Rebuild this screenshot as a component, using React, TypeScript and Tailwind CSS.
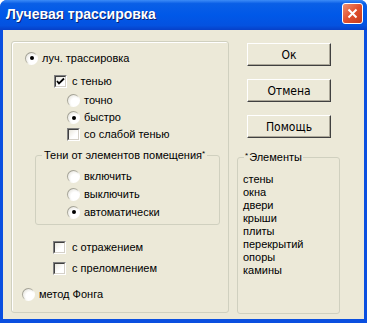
import React from 'react';

const font = "font-['Liberation_Sans',Arial,sans-serif] text-[11px] text-black";

const Radio: React.FC<{ on?: boolean }> = ({ on }) => (
  <div className="w-[13px] h-[13px] rounded-full bg-[linear-gradient(135deg,#8a8a80_0%,#b8b6a8_45%,#ffffff_60%)] p-[1px] shrink-0">
    <div className="w-full h-full rounded-full bg-[radial-gradient(circle_at_65%_65%,#ffffff_40%,#dcdad0_100%)] flex items-center justify-center">
      {on && <div className="w-[4px] h-[4px] rounded-full bg-black" />}
    </div>
  </div>
);

const Check: React.FC<{ on?: boolean }> = ({ on }) => (
  <div className="w-[13px] h-[13px] shrink-0 border border-t-[#808080] border-l-[#808080] border-r-white border-b-white">
    <div className="w-full h-full border border-t-[#404040] border-l-[#404040] border-r-[#d4d0c8] border-b-[#d4d0c8] bg-[linear-gradient(135deg,#e8e6dc,#ffffff_60%)] flex items-center justify-center">
      {on && (
        <svg width="9" height="9" viewBox="0 0 9 9">
          <path d="M1 4 L3 6.5 L8 1.5" fill="none" stroke="#000" strokeWidth="1.8" />
        </svg>
      )}
    </div>
  </div>
);

const Row: React.FC<{ kind: 'r' | 'c'; on?: boolean; label: string; cls: string; gap?: string }> = ({ kind, on, label, cls, gap = 'gap-[4px]' }) => (
  <div className={`flex items-center ${gap} ${cls}`}>
    {kind === 'r' ? <Radio on={on} /> : <Check on={on} />}
    <span className="leading-none">{label}</span>
  </div>
);

const Btn: React.FC<{ label: string; cls: string }> = ({ label, cls }) => (
  <button className={`w-[84px] h-[23px] ml-[10px] bg-[#ece9d8] border border-t-white border-l-white border-r-[#404040] border-b-[#404040] shadow-[inset_-1px_-1px_0_#aca899] flex items-center justify-center font-['Liberation_Sans_Narrow','DejaVu_Sans_Condensed',sans-serif] text-[12px] text-black ${cls}`}>
    {label}
  </button>
);

const elements = ['стены', 'окна', 'двери', 'крыши', 'плиты', 'перекрытий', 'опоры', 'камины'];

export default function App() {
  return (
    <div className={`w-[367px] h-[323px] flex flex-col bg-[#0a4fe0] rounded-t-[7px] overflow-hidden ${font}`}>
      {/* title bar */}
      <div className="h-[30px] shrink-0 flex items-center justify-between pl-[6px] pr-[4px] bg-[linear-gradient(180deg,#3d8cf7_0%,#0a5fe6_12%,#0058e8_50%,#0452e0_85%,#0740c8_100%)]">
        <span className="font-['Liberation_Sans',Arial,sans-serif] font-bold text-[14px] text-white [text-shadow:1px_1px_0_#0a1f70] -mt-[1px]">
          Лучевая трассировка
        </span>
        <div className="w-[21px] h-[21px] -mt-[3px] rounded-[3px] border border-white bg-[linear-gradient(135deg,#ee9072,#e0502e_50%,#c63c1c)] flex items-center justify-center">
          <svg width="11" height="11" viewBox="0 0 11 11">
            <path d="M1.5 1.5 L9.5 9.5 M9.5 1.5 L1.5 9.5" stroke="#fff" strokeWidth="2" />
          </svg>
        </div>
      </div>

      {/* client */}
      <div className="flex-1 mx-[3px] mb-[4px] bg-[#ece9d8] flex items-start pt-[11px] pl-[8px] gap-[8px]">
        {/* left group */}
        <div className="w-[218px] h-[272px] border border-[#d0d0bf] rounded-[3px] flex flex-col shadow-[inset_1px_1px_0_#fff]">
          <Row kind="r" on label="луч. трассировка" cls="h-[18px] mt-[7px] ml-[13px]" />
          <Row kind="c" on label="с тенью" cls="h-[18px] mt-[5px] ml-[42px]" gap="gap-[5px]" />
          <Row kind="r" label="точно" cls="h-[17px] mt-[2px] ml-[55px]" />
          <Row kind="r" on label="быстро" cls="h-[17px] ml-[55px]" />
          <Row kind="c" label="со слабой тенью" cls="h-[17px] ml-[55px]" />
          <fieldset className="w-[185px] ml-[23px] mt-[5px] border border-[#d0d0bf] rounded-[3px] pb-[3px] flex flex-col">
            <legend className="ml-[6px] px-[2px] h-[14px] leading-[14px]">
              Тени от элементов помещения<sup className="text-[8px] top-[-3px]">*</sup>
            </legend>
            <Row kind="r" label="включить" cls="h-[18px] mt-[5px] ml-[31px]" />
            <Row kind="r" label="выключить" cls="h-[18px] ml-[31px]" />
            <Row kind="r" on label="автоматически" cls="h-[18px] ml-[31px]" />
          </fieldset>
          <Row kind="c" label="с отражением" cls="h-[18px] mt-[13px] ml-[41px]" gap="gap-[6px]" />
          <Row kind="c" label="с преломлением" cls="h-[18px] mt-[3px] ml-[41px]" gap="gap-[6px]" />
          <Row kind="r" label="метод Фонга" cls="h-[18px] mt-[8px] ml-[10px]" />
        </div>

        {/* right column */}
        <div className="w-[103px] flex flex-col">
          <Btn label="Ок" cls="mt-[2px]" />
          <Btn label="Отмена" cls="mt-[13px]" />
          <Btn label="Помощь" cls="mt-[13px]" />
          <fieldset className="h-[164px] mt-[12px] border border-[#d0d0bf] rounded-[3px] flex flex-col">
            <legend className="ml-[6px] px-[1px] h-[14px] leading-[14px]">
              <sup className="text-[8px] top-[-3px] mr-[1px]">*</sup>Элементы
            </legend>
            <div className="mt-[9px] ml-[5px] flex flex-col">
              {elements.map(e => (
                <div key={e} className="h-[13px] leading-[13px]">{e}</div>
              ))}
            </div>
          </fieldset>
        </div>
      </div>
    </div>
  );
}
